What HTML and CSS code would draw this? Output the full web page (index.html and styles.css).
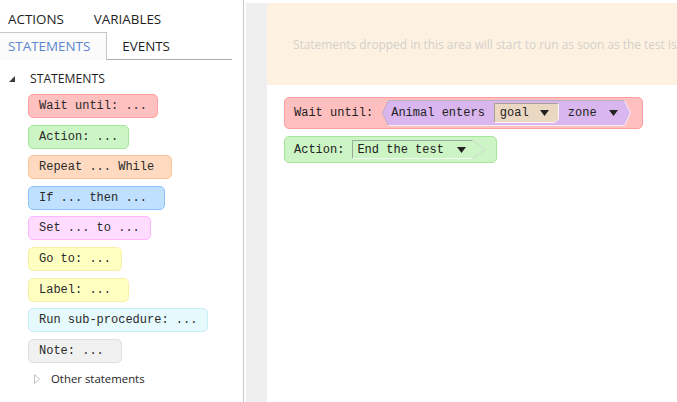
FILE: index.html
```html
<!DOCTYPE html>
<html>
<head>
<meta charset="utf-8">
<title>Test editor</title>
<link rel="stylesheet" href="styles.css">
</head>
<body>
<div class="app">
  <aside class="sidebar">
    <div class="tabs">
      <div class="tabrow">
        <span class="tab">ACTIONS</span>
        <span class="tab">VARIABLES</span>
      </div>
      <div class="tabrow tabrow-lined">
        <span class="tab tab-active">STATEMENTS</span>
        <span class="tab">EVENTS</span>
      </div>
    </div>
    <div class="tree">
      <div class="tree-head">
        <svg class="caret-open" width="6" height="6" viewBox="0 0 6 6"><polygon points="6,0 6,6 0,6" fill="#3c3c3c"/></svg>
        <span>STATEMENTS</span>
      </div>
      <ul class="palette">
        <li class="blk blk-wait">Wait until: ...</li>
        <li class="blk blk-action">Action: ...</li>
        <li class="blk blk-repeat">Repeat ... While </li>
        <li class="blk blk-if">If ... then ... </li>
        <li class="blk blk-set">Set ... to ...</li>
        <li class="blk blk-goto">Go to: ...</li>
        <li class="blk blk-label">Label: ... </li>
        <li class="blk blk-run">Run sub-procedure: ...</li>
        <li class="blk blk-note">Note: ... </li>
      </ul>
      <div class="tree-other">
        <svg class="caret-closed" width="7" height="10" viewBox="0 0 7 10"><polygon points="0.5,0.5 5.5,5 0.5,9.5" fill="none" stroke="#c4c4c4" stroke-width="1"/></svg>
        <span>Other statements</span>
      </div>
    </div>
  </aside>
  <main class="workspace">
    <div class="gutter"></div>
    <div class="canvas">
      <div class="dropzone">Statements dropped in this area will start to run as soon as the test is started.</div>
      <div class="script">
        <div class="sblk sblk-wait">
          <span class="kw">Wait until:</span>
          <span class="cond">
            <svg class="shape" width="249" height="26" viewBox="0 0 249 26">
              <polygon points="0.5,13 6.5,0.5 242.5,0.5 248.5,13 242.5,25.5 6.5,25.5" fill="#dab6ef"/>
              <polyline points="6.5,25.5 0.5,13 6.5,0.5 242.5,0.5" fill="none" stroke="#b9aec3" stroke-width="1"/>
              <polyline points="242.5,0.5 248.5,13 242.5,25.5 6.5,25.5" fill="none" stroke="#f4ecf8" stroke-width="1"/>
            </svg>
            <span class="ctext">Animal enters</span>
            <span class="dd dd-goal">
              <svg class="shape" width="65" height="20" viewBox="0 0 65 20">
                <polygon points="0.5,0.5 64.5,0.5 64.5,16 60.5,19.5 0.5,19.5" fill="#ead8c3"/>
                <polyline points="0.5,19.5 0.5,0.5 64.5,0.5" fill="none" stroke="#a89e92" stroke-width="1"/>
                <polyline points="64.5,0.5 64.5,16 60.5,19.5 0.5,19.5" fill="none" stroke="#fbf6ef" stroke-width="1"/>
              </svg>
              <span class="ctext">goal</span>
              <svg class="arrow" width="9" height="6" viewBox="0 0 9 6"><polygon points="0,0 9,0 4.5,6" fill="#222"/></svg>
            </span>
            <span class="zone">
              <span class="ctext">zone</span>
              <svg class="arrow arrow-zone" width="9" height="6" viewBox="0 0 9 6"><polygon points="0,0 9,0 4.5,6" fill="#222"/></svg>
            </span>
          </span>
        </div>
        <div class="sblk sblk-action">
          <span class="kw">Action:</span>
          <span class="dd dd-end">
            <svg class="shape" width="134" height="19" viewBox="0 0 134 19">
              <polygon points="0.5,0.5 120.5,0.5 133.5,9.5 120.5,18.5 0.5,18.5" fill="#ccf4c5"/>
              <polyline points="0.5,18.5 0.5,0.5 120.5,0.5" fill="none" stroke="#9aa897" stroke-width="1"/>
              <polyline points="120.5,0.5 133.5,9.5 120.5,18.5" fill="none" stroke="#d2d8d0" stroke-width="1"/>
              <polyline points="120.5,18.5 0.5,18.5" fill="none" stroke="#f3fdf1" stroke-width="1"/>
            </svg>
            <span class="ctext">End the test</span>
            <svg class="arrow arrow-end" width="9" height="6" viewBox="0 0 9 6"><polygon points="0,0 9,0 4.5,6" fill="#222"/></svg>
          </span>
        </div>
      </div>
    </div>
  </main>
</div>
</body>
</html>
```
FILE: styles.css
```css
* { box-sizing: border-box; }

html, body {
  margin: 0;
  padding: 0;
  background: #ffffff;
}

body {
  font-family: "Open Sans", "Noto Sans", sans-serif;
  color: #1e1e1e;
  overflow: hidden;
}

.app {
  display: flex;
  width: 677px;
  height: 402px;
  overflow: hidden;
}

/* ---------- sidebar ---------- */
.sidebar {
  width: 244px;
  flex: none;
  border-right: 1px solid #c9c9c9;
  overflow: hidden;
}

.tabs {
  margin-left: -7px;
  width: 239px;
}

.tabrow {
  display: flex;
  height: 28px;
  align-items: center;
}

.tabrow:first-child {
  height: 32px;
  padding-top: 4px;
}

.tabrow-lined {
  border-bottom: 1px solid #acacac;
  align-items: stretch;
}

.tab {
  display: flex;
  align-items: center;
  padding: 0 14px;
  border: 1px solid transparent;
  border-bottom: 0;
  font-size: 13.4px;
  line-height: 18px;
  white-space: nowrap;
}

.tab-active {
  border-color: #c6c6c6;
  background: #fbfbfb;
  color: #5b86cf;
  margin-bottom: -1px;
  padding-bottom: 1px;
  padding-right: 16px;
}

.tree {
  padding-top: 10px;
}

.tree-head {
  display: flex;
  align-items: center;
  height: 16px;
  padding-left: 9px;
  font-size: 12.2px;
}

.caret-open {
  margin-right: 15px;
  margin-top: 2px;
}

.palette {
  list-style: none;
  margin: 8px 0 0 0;
  padding: 0 0 0 28px;
  display: flex;
  flex-direction: column;
  align-items: flex-start;
  gap: 6.6px;
}

.blk {
  height: 24px;
  line-height: 22px;
  padding: 0 10px;
  border: 1px solid;
  border-radius: 5px;
  font-family: "Liberation Mono", "Courier New", monospace;
  font-size: 12px;
  color: #2a2a2a;
  white-space: pre;
}

.blk-wait   { background: #ffc0c0; border-color: #ff9f9f; }
.blk-action { background: #ccf5c6; border-color: #a6e79b; }
.blk-repeat { background: #ffdac0; border-color: #ffc395; }
.blk-if     { background: #bfe0ff; border-color: #8ec4fb; }
.blk-set    { background: #ffdcff; border-color: #ffb5ff; }
.blk-goto   { background: #ffffc2; border-color: #f6f0a6; }
.blk-label  { background: #ffffc2; border-color: #f6f0a6; }
.blk-run    { background: #e6f9fc; border-color: #cbeff6; }
.blk-note   { background: #f1f1f1; border-color: #dedede; }

.tree-other {
  display: flex;
  align-items: center;
  height: 16px;
  margin-top: 8px;
  padding-left: 34px;
  font-size: 11.4px;
}

.caret-closed {
  margin-right: 10px;
}

/* ---------- workspace ---------- */
.workspace {
  flex: 1;
  display: flex;
  padding: 3px 0 0 2px;
  min-width: 0;
}

.gutter {
  width: 21px;
  flex: none;
  background: #efefef;
}

.canvas {
  flex: 1;
  min-width: 0;
  overflow: hidden;
}

.dropzone {
  height: 82px;
  display: flex;
  align-items: center;
  padding-left: 26px;
  background: #fdf2e1;
  color: #d3d0cc;
  font-size: 11.9px;
  white-space: nowrap;
  overflow: hidden;
}

.script {
  padding: 12px 0 0 17px;
  display: flex;
  flex-direction: column;
  align-items: flex-start;
  gap: 7px;
}

.sblk {
  display: flex;
  align-items: center;
  border: 1px solid;
  border-radius: 5px;
  font-family: "Liberation Mono", "Courier New", monospace;
  font-size: 12px;
  color: #222;
  white-space: pre;
}

.sblk-wait {
  height: 32px;
  padding: 0 11px 0 9px;
  background: #ffbfbf;
  border-color: #ff9f9f;
}

.sblk-action {
  height: 27px;
  padding: 0 10px 0 9px;
  background: #ccf4c5;
  border-color: #a8e69c;
}

.kw {
  line-height: 14px;
}

.cond {
  position: relative;
  isolation: isolate;
  display: flex;
  align-items: center;
  width: 249px;
  height: 26px;
  margin-left: 9px;
  padding-left: 9px;
}

.shape {
  position: absolute;
  left: 0;
  top: 0;
  z-index: -1;
}

.ctext {
  line-height: 14px;
}

.dd {
  position: relative;
  isolation: isolate;
  display: flex;
  align-items: center;
}

.dd-goal {
  width: 65px;
  height: 20px;
  margin-left: 9px;
  padding-left: 6px;
}

.arrow {
  margin-left: 11px;
  flex: none;
}

.zone {
  display: flex;
  align-items: center;
  margin-left: 9px;
}

.arrow-zone {
  margin-left: 12.5px;
}

.dd-end {
  width: 134px;
  height: 19px;
  margin-left: 8px;
  padding-left: 5px;
}

.arrow-end {
  margin-left: 13px;
}
```
